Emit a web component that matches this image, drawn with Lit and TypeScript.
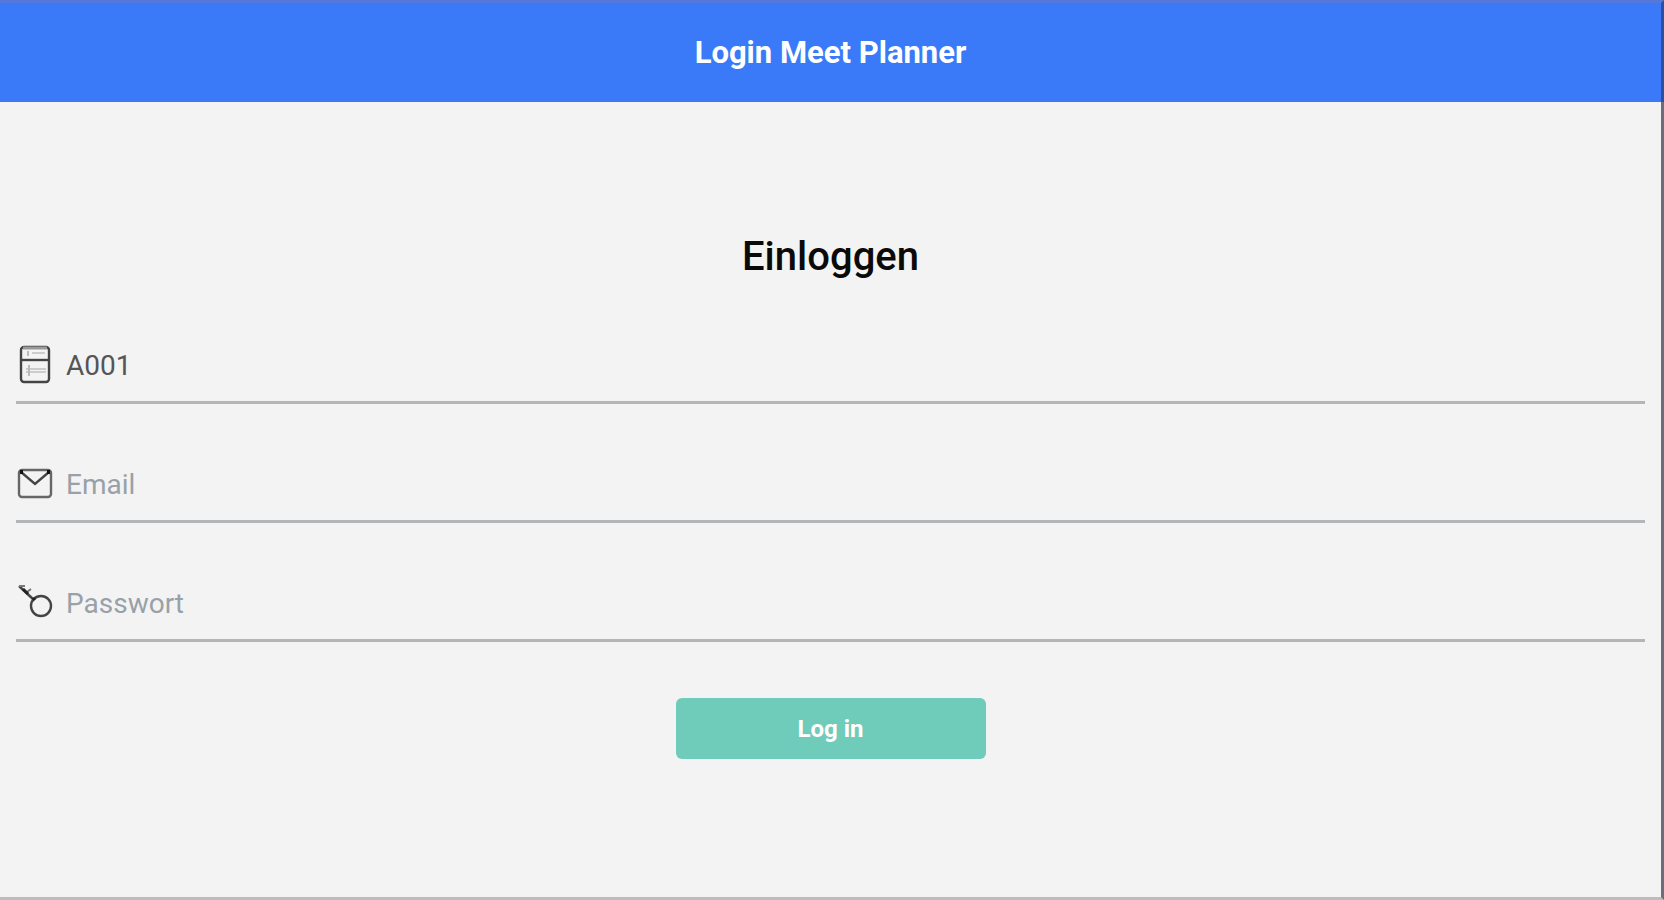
import { LitElement, html, css } from "lit";
import { customElement } from "lit/decorators.js";

@customElement("app-root")
export class AppRoot extends LitElement {
  static styles = css`
    :host {
      display: flex;
      flex-direction: column;
      box-sizing: border-box;
      min-height: 100vh;
      background: #f3f3f3;
      border-right: 3px solid #6c6d7a;
      border-bottom: 3px solid #bcbcbd;
      font-family: Roboto, "Liberation Sans", sans-serif;
    }
    .bar {
      box-sizing: border-box;
      height: 102px;
      display: flex;
      align-items: center;
      justify-content: center;
      background: #3a7af8;
      border-top: 3px solid #5577dc;
      margin-right: -3px;
      border-right: 3px solid #2b4fa5;
      color: #fff;
    }
    .bar-title {
      margin: 0;
      font-size: 31px;
      line-height: 36px;
      font-weight: 700;
    }
    .form {
      display: flex;
      flex-direction: column;
      padding: 131px 16px 0;
    }
    .heading {
      margin: 0 0 48px;
      text-align: center;
      font-size: 40px;
      line-height: 48px;
      font-weight: 500;
      color: #0a0a0a;
    }
    .field {
      display: flex;
      align-items: center;
      gap: 12px;
      box-sizing: border-box;
      height: 75px;
      margin-bottom: 44px;
      border-bottom: 3px solid #b2b6b9;
    }
    .icon {
      display: block;
      flex: none;
      width: 38px;
      height: 40px;
      fill: none;
      stroke: #444;
      stroke-width: 2.4;
    }
    .input {
      flex: 1;
      min-width: 0;
      height: 48px;
      padding: 0;
      border: 0;
      outline: 0;
      background: transparent;
      font-family: inherit;
      font-size: 28px;
      font-weight: 400;
      color: #555;
    }
    .input::placeholder {
      color: #98a1a8;
      opacity: 1;
    }
    .submit {
      align-self: center;
      width: 310px;
      height: 61px;
      margin-top: 12px;
      padding: 0;
      border: 0;
      border-radius: 6px;
      background: #6fcbba;
      color: #fff;
      font-family: inherit;
      font-size: 24px;
      font-weight: 700;
    }
  `;

  render() {
    return html`
      <header class="bar"><h1 class="bar-title">Login Meet Planner</h1></header>
      <form class="form">
        <h2 class="heading">Einloggen</h2>
        <div class="field">
          <svg class="icon" viewBox="0 0 38 40" aria-hidden="true">
            <rect x="5" y="2" width="28" height="35" rx="3" />
            <path d="M5 15h28" />
            <path d="M7 3h24" stroke="#999" stroke-width="3" />
            <path d="M16 8h13M10 24h20M10 27h20" stroke="#ccc" stroke-width="2" />
            <path d="M12 6v5M13 20v11" stroke="#bbb" stroke-width="2" />
          </svg>
          <input class="input" type="text" aria-label="Server" value="A001" />
        </div>
        <div class="field">
          <svg class="icon" viewBox="0 0 38 40" aria-hidden="true">
            <rect x="3" y="6" width="32" height="27" rx="3" stroke="#666" />
            <path d="M5 8l14 12L33 8" />
            <path d="M4 8h3M31 8h3" stroke="#111" stroke-width="4" />
          </svg>
          <input class="input" type="email" aria-label="Email" placeholder="Email" />
        </div>
        <div class="field">
          <svg class="icon" viewBox="0 0 38 40" aria-hidden="true">
            <circle cx="25" cy="23" r="10" />
            <path d="M3 3l15 14" />
            <path d="M3 3h6M11 9l4-3" stroke="#777" stroke-width="2" />
            <path d="M7 6l5 5M17 15l2 2" stroke="#222" stroke-width="3" />
          </svg>
          <input class="input" type="password" aria-label="Passwort" placeholder="Passwort" />
        </div>
        <button class="submit" type="button">Log in</button>
      </form>
    `;
  }
}
